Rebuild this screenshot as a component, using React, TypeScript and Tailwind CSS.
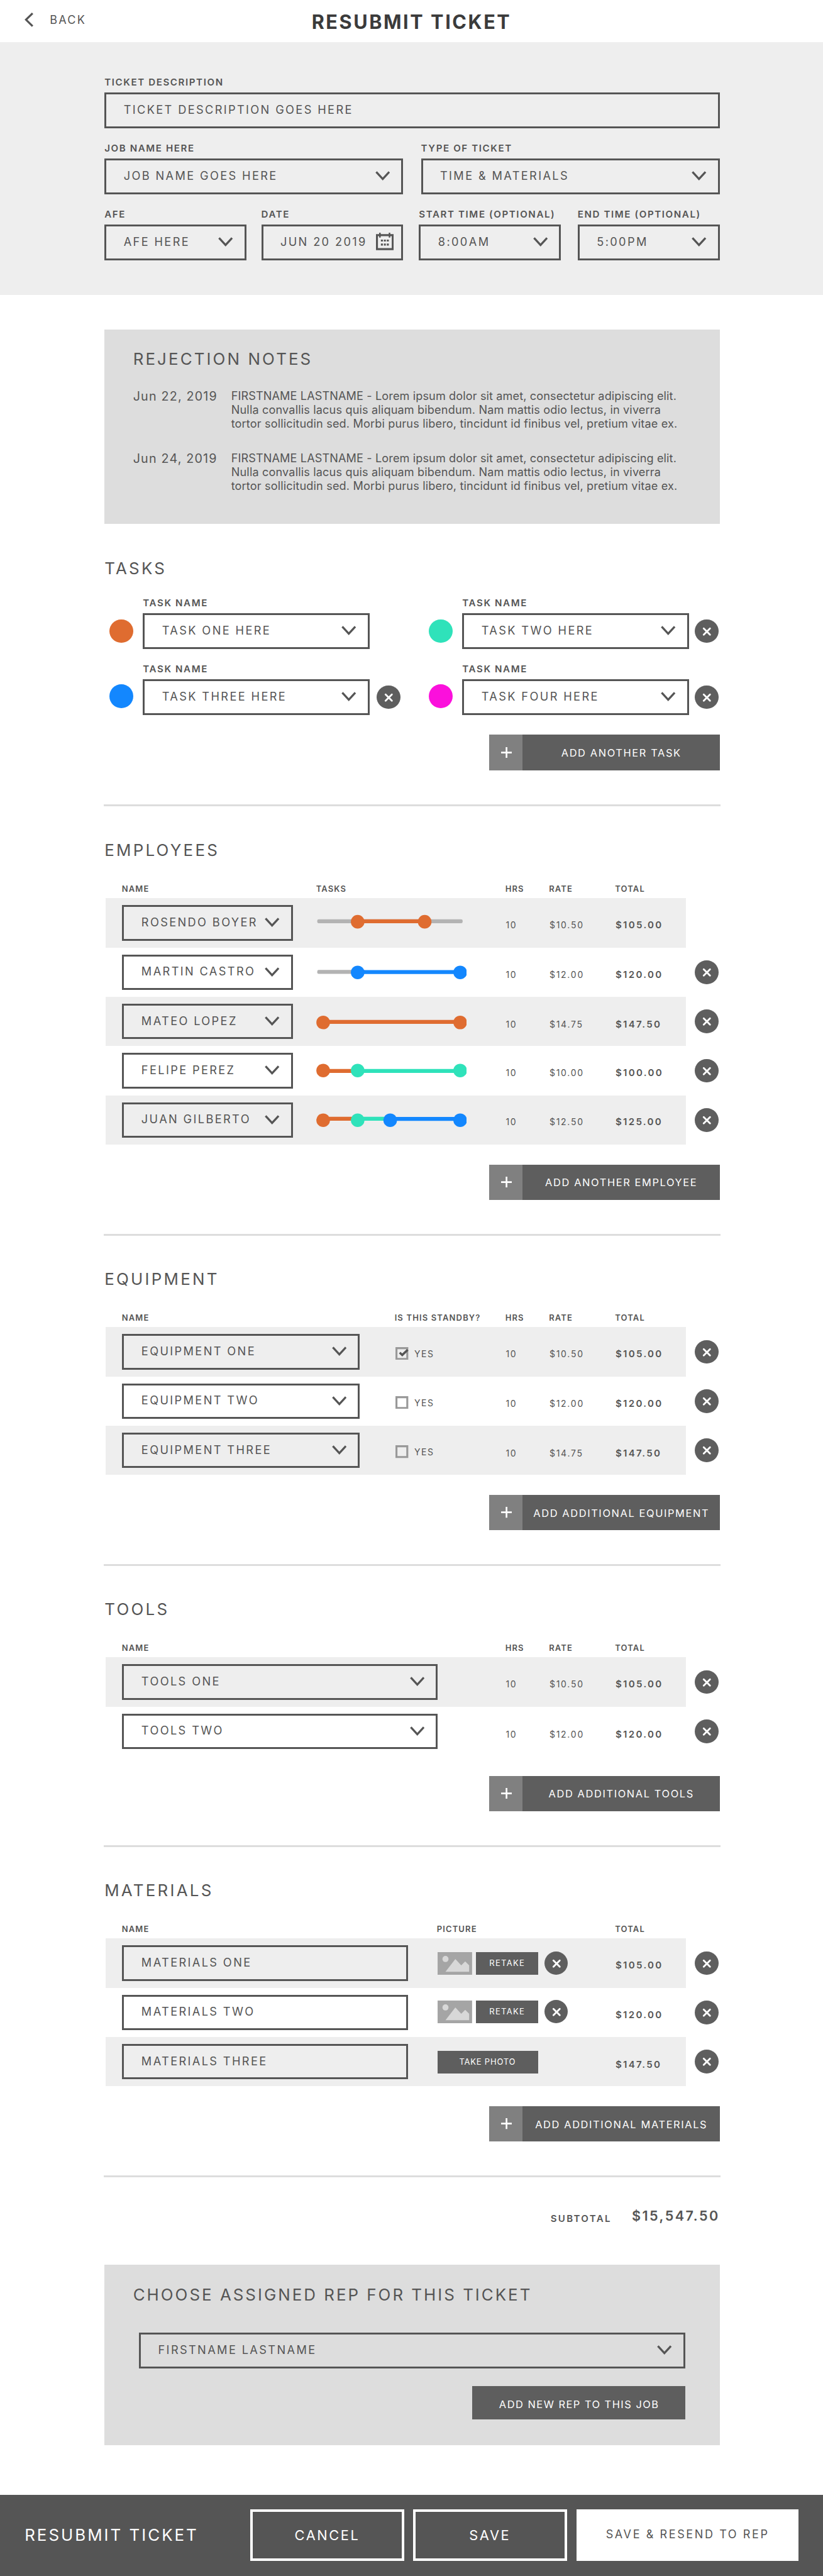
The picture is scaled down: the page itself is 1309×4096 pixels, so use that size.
import React from "react";

const ORANGE = "#df6c30";
const TEAL = "#2fe2ba";
const BLUE = "#1387fe";
const MAGENTA = "#fb10dc";

function Chevron() {
  return (
    <svg viewBox="0 0 30 19" className="mt-3 h-19 w-30 shrink-0" fill="none" stroke="#555" strokeWidth="4.2">
      <path d="M1.8 1.8 15 16 28.2 1.8" />
    </svg>
  );
}

function CalendarIcon() {
  return (
    <svg viewBox="0 0 36 36" className="h-36 w-36 shrink-0" fill="none" stroke="#555">
      <path d="M2 5h32v28.3H2z" strokeWidth="4" />
      <path d="M8 0v10M27.5 0v10" strokeWidth="3.2" />
      <path d="M10 16h16M10 24h16" strokeWidth="4" strokeDasharray="4 2" />
    </svg>
  );
}

function RemoveButton({ className = "" }: { className?: string }) {
  return (
    <button className={`flex size-48 shrink-0 items-center justify-center rounded-full bg-[#5e5e5e] ${className}`}>
      <svg viewBox="0 0 48 48" className="size-48" stroke="#fff" strokeWidth="3.6" strokeLinecap="round">
        <path d="M18.2 18.2 31 31M31 18.2 18.2 31" />
      </svg>
    </button>
  );
}

type FieldProps = {
  text: string;
  label?: string;
  icon?: "chevron" | "calendar" | "none";
  className?: string;
};

function Field({ text, label, icon = "chevron", className = "" }: FieldProps) {
  return (
    <div className={`flex flex-col ${className}`}>
      {label && (
        <span className="mb-13 pt-1 text-[15.1px] leading-14 font-semibold tracking-[1.6px] whitespace-nowrap">
          {label}
        </span>
      )}
      <div
        className={`flex h-72 items-center justify-between border-[3px] border-[#555] pb-5 pl-35 ${
          icon === "calendar" ? "pr-16" : "pr-23"
        }`}
      >
        <span className="pt-1 text-[18.2px] leading-18 tracking-[2.37px] whitespace-nowrap">{text}</span>
        {icon === "chevron" && <Chevron />}
        {icon === "calendar" && <CalendarIcon />}
      </div>
    </div>
  );
}

function Heading({ children, tracking = "tracking-[3.25px]" }: { children: React.ReactNode; tracking?: string }) {
  return (
    <h2 className={`-mb-1 pt-1 text-[25.9px] leading-24 whitespace-nowrap ${tracking}`}>{children}</h2>
  );
}

function AddButton({ label }: { label: string }) {
  return (
    <button className="mt-40 ml-auto flex h-72 w-468 bg-[#5e5e5e] text-white">
      <span className="flex h-full w-68 items-center justify-center bg-[#808080]">
        <svg viewBox="0 0 22 22" className="ml-3 size-22" stroke="#fff" strokeWidth="3.4">
          <path d="M0 11h22M11 0v22" />
        </svg>
      </span>
      <span className="flex h-full flex-1 items-center justify-center pt-2 pl-1 text-[16.4px] tracking-[1.62px] whitespace-nowrap">
        {label}
      </span>
    </button>
  );
}

function Divider() {
  return <div className="-mx-2 mt-69 h-4 bg-[#ddd]" />;
}

function ColumnHeads({ grid, names }: { grid: string; names: string[] }) {
  return (
    <div className={`mt-60 mb-13 ml-2 grid pt-1 pl-33 ${grid}`}>
      {names.map((n) => (
        <span key={n} className="text-[13px] leading-12 font-semibold tracking-[1.15px] whitespace-nowrap">
          {n}
        </span>
      ))}
    </div>
  );
}

type RowProps = { index: number; grid: string; removable?: boolean; children: React.ReactNode };

function Row({ index, grid, removable = true, children }: RowProps) {
  return (
    <div className="ml-2 flex h-100 items-center gap-18">
      <div className={`grid h-full w-1178 items-center pl-34 ${grid} ${index % 2 === 0 ? "bg-[#eee]" : ""}`}>
        {children}
      </div>
      {removable && <RemoveButton />}
    </div>
  );
}

function Value({ children, low, bold }: { children: React.ReactNode; low: boolean; bold?: boolean }) {
  return (
    <span
      className={`leading-13 whitespace-nowrap ${low ? "pt-12" : "pt-8"} ${
        bold ? "text-[15.1px] font-semibold tracking-[2.3px]" : "text-[14px] tracking-[1.75px]"
      }`}
    >
      {children}
    </span>
  );
}

type Seg = { from: number; to: number; y: number; color: string };
type Knob = { x: number; color: string };

function Slider({ segs, knobs, knobY }: { segs: Seg[]; knobs: Knob[]; knobY: number }) {
  return (
    <svg viewBox="0 0 304 100" className="h-100 w-304">
      {segs.map((s, i) => (
        <rect key={i} x={s.from} y={s.y - 4} width={s.to - s.from} height="8" rx="3" fill={s.color} />
      ))}
      {knobs.map((k, i) => (
        <circle key={i} cx={k.x} cy={knobY} r="13.8" fill={k.color} />
      ))}
    </svg>
  );
}

const EMPLOYEES = [
  {
    name: "ROSENDO BOYER", rate: "$10.50", total: "$105.00", low: false, knobY: 48,
    segs: [{ from: 2, to: 297, y: 47, color: "#b3b3b3" }, { from: 84, to: 220, y: 47, color: ORANGE }],
    knobs: [{ x: 84, color: ORANGE }, { x: 220, color: ORANGE }],
  },
  {
    name: "MARTIN CASTRO", rate: "$12.00", total: "$120.00", low: true, knobY: 50,
    segs: [{ from: 2, to: 100, y: 49, color: "#b3b3b3" }, { from: 84, to: 292, y: 49.3, color: BLUE }],
    knobs: [{ x: 84, color: BLUE }, { x: 292, color: BLUE }],
  },
  {
    name: "MATEO LOPEZ", rate: "$14.75", total: "$147.50", low: true, knobY: 52,
    segs: [{ from: 14, to: 292, y: 51, color: ORANGE }],
    knobs: [{ x: 14, color: ORANGE }, { x: 292, color: ORANGE }],
  },
  {
    name: "FELIPE PEREZ", rate: "$10.00", total: "$100.00", low: false, knobY: 50,
    segs: [{ from: 14, to: 84, y: 51, color: ORANGE }, { from: 84, to: 292, y: 51, color: TEAL }],
    knobs: [{ x: 14, color: ORANGE }, { x: 84, color: TEAL }, { x: 292, color: TEAL }],
  },
  {
    name: "JUAN GILBERTO", rate: "$12.50", total: "$125.00", low: false, knobY: 50,
    segs: [
      { from: 14, to: 84, y: 47, color: ORANGE },
      { from: 84, to: 150, y: 47, color: TEAL },
      { from: 150, to: 292, y: 47.3, color: BLUE },
    ],
    knobs: [{ x: 14, color: ORANGE }, { x: 84, color: TEAL }, { x: 150, color: BLUE }, { x: 292, color: BLUE }],
  },
];

const EQUIPMENT = [
  { name: "EQUIPMENT ONE", standby: true, rate: "$10.50", total: "$105.00" },
  { name: "EQUIPMENT TWO", standby: false, rate: "$12.00", total: "$120.00" },
  { name: "EQUIPMENT THREE", standby: false, rate: "$14.75", total: "$147.50" },
];

const TOOLS = [
  { name: "TOOLS ONE", rate: "$10.50", total: "$105.00" },
  { name: "TOOLS TWO", rate: "$12.00", total: "$120.00" },
];

const MATERIALS = [
  { name: "MATERIALS ONE", photo: true, total: "$105.00" },
  { name: "MATERIALS TWO", photo: true, total: "$120.00" },
  { name: "MATERIALS THREE", photo: false, total: "$147.50" },
];

const GRID_EMPLOYEES = "grid-cols-[309px_301px_69.5px_105px_1fr]";
const GRID_EQUIPMENT = "grid-cols-[434px_176px_69.5px_105px_1fr]";
const GRID_TOOLS = "grid-cols-[610px_69.5px_105px_1fr]";
const GRID_MATERIALS = "grid-cols-[501px_283.5px_1fr]";

function Checkbox({ checked }: { checked: boolean }) {
  return (
    <span className="flex items-center gap-10 pl-1">
      <svg viewBox="0 0 28 26" className="h-26 w-28" fill="none">
        <path d="M2 2h22v22H2z" stroke="#999" strokeWidth="4" />
        {checked && <path d="M8.6 11.2 13.8 16 24.8 5.4" stroke="#555" strokeWidth="4.6" />}
      </svg>
      <span className="pt-2 text-[14px] leading-13 tracking-[1.6px]">YES</span>
    </span>
  );
}

function PhotoPlaceholder() {
  return (
    <svg viewBox="0 0 70 46" className="h-46 w-70">
      <rect width="70" height="46" fill="#a5a5a5" />
      <circle cx="16" cy="14" r="6.2" fill="#d8d8d8" />
      <path d="M16 40 36 14 48 26.7 56 18.7 64 26.7V40z" fill="#d8d8d8" />
    </svg>
  );
}

function RejectionNote({ date }: { date: string }) {
  return (
    <div className="flex">
      <span className="w-199 shrink-0 pt-1 text-[19.7px] leading-28 tracking-[1.2px] whitespace-nowrap">{date}</span>
      <p className="text-[18.1px] leading-28 tracking-[0.16px] whitespace-nowrap">
        <span className="tracking-[0.12px]">
          FIRSTNAME LASTNAME - Lorem ipsum dolor sit amet, consectetur adipiscing elit.
        </span>
        <br />
        Nulla convallis lacus quis aliquam bibendum. Nam mattis odio lectus, in viverra
        <br />
        tortor sollicitudin sed. Morbi purus libero, tincidunt id finibus vel, pretium vitae ex.
      </p>
    </div>
  );
}

export default function App() {
  return (
    <div className="flex h-[4096px] w-full flex-col overflow-hidden bg-white font-['Inter',sans-serif] text-[#555] [--spacing:0.784px]">
      <header className="grid h-86 shrink-0 grid-cols-[1fr_auto_1fr] px-50">
        <div className="flex items-start gap-33 pt-26">
          <svg viewBox="0 0 18 29" className="h-29 w-18" fill="none" stroke="#555" strokeWidth="4">
            <path d="M16.4 1.4 3 14.5 16.4 27.6" />
          </svg>
          <span className="mt-6 text-[18px] leading-17 tracking-[2.3px]">BACK</span>
        </div>
        <h1 className="pt-31 text-[30.6px] leading-29 font-bold tracking-[2.6px] whitespace-nowrap text-[#3b3b3b]">
          RESUBMIT TICKET
        </h1>
      </header>

      <section className="h-512 shrink-0 bg-[#eee] px-212 pt-74">
        <div className="flex w-1248 flex-col gap-34">
          <Field label="TICKET DESCRIPTION" text="TICKET DESCRIPTION GOES HERE" icon="none" />
          <div className="flex justify-between">
            <Field label="JOB NAME HERE" text="JOB NAME GOES HERE" className="w-606" />
            <Field label="TYPE OF TICKET" text="TIME & MATERIALS" className="w-606" />
          </div>
          <div className="flex">
            <Field label="AFE" text="AFE HERE" className="w-288" />
            <Field label="DATE" text="JUN 20 2019" icon="calendar" className="ml-30 w-288" />
            <Field label="START TIME (OPTIONAL)" text="8:00AM" className="ml-32 w-288" />
            <Field label="END TIME (OPTIONAL)" text="5:00PM" className="ml-34 w-288" />
          </div>
        </div>
      </section>

      <main className="ml-212 flex w-1248 shrink-0 flex-col">
        <section className="mt-70 h-394 bg-[#ddd] pt-48 pl-58">
          <Heading tracking="tracking-[3.1px]">REJECTION NOTES</Heading>
          <div className="mt-50 flex flex-col gap-42">
            <RejectionNote date="Jun 22, 2019" />
            <RejectionNote date="Jun 24, 2019" />
          </div>
        </section>

        <section className="mt-78 flex flex-col">
          <Heading>TASKS</Heading>
          <div className="mt-52 grid grid-cols-[508px_1fr] gap-y-34">
            <div className="flex items-end pl-10">
              <span className="mr-20 mb-12 size-48 rounded-full" style={{ background: ORANGE }} />
              <Field label="TASK NAME" text="TASK ONE HERE" className="w-460" />
            </div>
            <div className="flex items-end pl-10">
              <span className="mr-20 mb-12 size-48 rounded-full" style={{ background: TEAL }} />
              <Field label="TASK NAME" text="TASK TWO HERE" className="w-460" />
              <RemoveButton className="mb-12 ml-12" />
            </div>
            <div className="flex items-end pl-10">
              <span className="mr-20 mb-14 size-48 rounded-full" style={{ background: BLUE }} />
              <Field label="TASK NAME" text="TASK THREE HERE" className="w-460" />
              <RemoveButton className="mb-12 ml-14" />
            </div>
            <div className="flex items-end pl-10">
              <span className="mr-20 mb-14 size-48 rounded-full" style={{ background: MAGENTA }} />
              <Field label="TASK NAME" text="TASK FOUR HERE" className="w-460" />
              <RemoveButton className="mb-12 ml-12" />
            </div>
          </div>
          <AddButton label="ADD ANOTHER TASK" />
          <Divider />
        </section>

        <section className="mt-77 flex flex-col">
          <Heading>EMPLOYEES</Heading>
          <ColumnHeads grid={GRID_EMPLOYEES} names={["NAME", "TASKS", "HRS", "RATE", "TOTAL"]} />
          {EMPLOYEES.map((e, i) => (
            <Row key={e.name} index={i} grid={GRID_EMPLOYEES} removable={i > 0}>
              <Field text={e.name} className="w-346" />
              <Slider segs={e.segs} knobs={e.knobs} knobY={e.knobY} />
              <Value low={e.low}>10</Value>
              <Value low={e.low}>{e.rate}</Value>
              <Value low={e.low} bold>{e.total}</Value>
            </Row>
          ))}
          <AddButton label="ADD ANOTHER EMPLOYEE" />
          <Divider />
        </section>

        <section className="mt-75 flex flex-col">
          <Heading>EQUIPMENT</Heading>
          <ColumnHeads grid={GRID_EQUIPMENT} names={["NAME", "IS THIS STANDBY?", "HRS", "RATE", "TOTAL"]} />
          {EQUIPMENT.map((e, i) => (
            <Row key={e.name} index={i} grid={GRID_EQUIPMENT}>
              <Field text={e.name} className="w-482" />
              <div className="pt-6"><Checkbox checked={e.standby} /></div>
              <Value low={i > 0}>10</Value>
              <Value low={i > 0}>{e.rate}</Value>
              <Value low={i > 0} bold>{e.total}</Value>
            </Row>
          ))}
          <AddButton label="ADD ADDITIONAL EQUIPMENT" />
          <Divider />
        </section>

        <section className="mt-75 flex flex-col">
          <Heading>TOOLS</Heading>
          <ColumnHeads grid={GRID_TOOLS} names={["NAME", "HRS", "RATE", "TOTAL"]} />
          {TOOLS.map((t, i) => (
            <Row key={t.name} index={i} grid={GRID_TOOLS}>
              <Field text={t.name} className="w-640" />
              <Value low={i > 0}>10</Value>
              <Value low={i > 0}>{t.rate}</Value>
              <Value low={i > 0} bold>{t.total}</Value>
            </Row>
          ))}
          <AddButton label="ADD ADDITIONAL TOOLS" />
          <Divider />
        </section>

        <section className="mt-75 flex flex-col">
          <Heading>MATERIALS</Heading>
          <ColumnHeads grid={GRID_MATERIALS} names={["NAME", "PICTURE", "TOTAL"]} />
          {MATERIALS.map((m, i) => (
            <Row key={m.name} index={i} grid={GRID_MATERIALS}>
              <Field text={m.name} icon="none" className="w-580" />
              {m.photo ? (
                <div className={`flex items-end pl-1 ${i === 0 ? "" : "pb-4"}`}>
                  <PhotoPlaceholder />
                  <button className="ml-8 h-46 w-126 bg-[#5e5e5e] pb-1 text-[13px] tracking-[1.3px] text-white">RETAKE</button>
                  <RemoveButton className="ml-12" />
                </div>
              ) : (
                <div className="flex pt-2 pl-1">
                  <button className="h-46 w-204 bg-[#5e5e5e] pr-2 pb-1 text-[13px] tracking-[0.8px] text-white">TAKE PHOTO</button>
                </div>
              )}
              <Value low={i > 0} bold>{m.total}</Value>
            </Row>
          ))}
          <AddButton label="ADD ADDITIONAL MATERIALS" />
          <Divider />
        </section>

        <section className="mt-67 flex h-20 justify-end gap-41">
          <span className="mt-10 text-[15.1px] leading-14 font-semibold tracking-[2.3px]">SUBTOTAL</span>
          <span className="pt-1 text-[21.6px] leading-20 font-semibold tracking-[2.45px]">$15,547.50</span>
        </section>

        <section className="mt-90 flex h-366 flex-col bg-[#ddd] pt-48 pr-70 pl-58">
          <Heading tracking="tracking-[3px]">CHOOSE ASSIGNED REP FOR THIS TICKET</Heading>
          <Field text="FIRSTNAME LASTNAME" className="mt-66 ml-12" />
          <button className="mt-36 ml-auto h-68 w-432 bg-[#5e5e5e] pt-7 pl-2 text-[16.4px] leading-20 tracking-[1.5px] text-white">
            ADD NEW REP TO THIS JOB
          </button>
        </section>
      </main>

      <footer className="mt-100 flex flex-1 items-start bg-[#555] pt-30 pl-50 text-white">
        <span className="w-458 pt-41 text-[25.9px] leading-24 tracking-[3px] whitespace-nowrap">RESUBMIT TICKET</span>
        <button className="mr-18 h-104 w-312 border-[4px] border-white pt-1 text-[21.8px] tracking-[2.6px]">CANCEL</button>
        <button className="mr-20 h-104 w-312 border-[4px] border-white pt-1 text-[21.8px] tracking-[2.6px]">SAVE</button>
        <button className="h-104 w-450 bg-white pb-3 text-[18px] tracking-[2.6px] text-[#555]">SAVE &amp; RESEND TO REP</button>
      </footer>
    </div>
  );
}
